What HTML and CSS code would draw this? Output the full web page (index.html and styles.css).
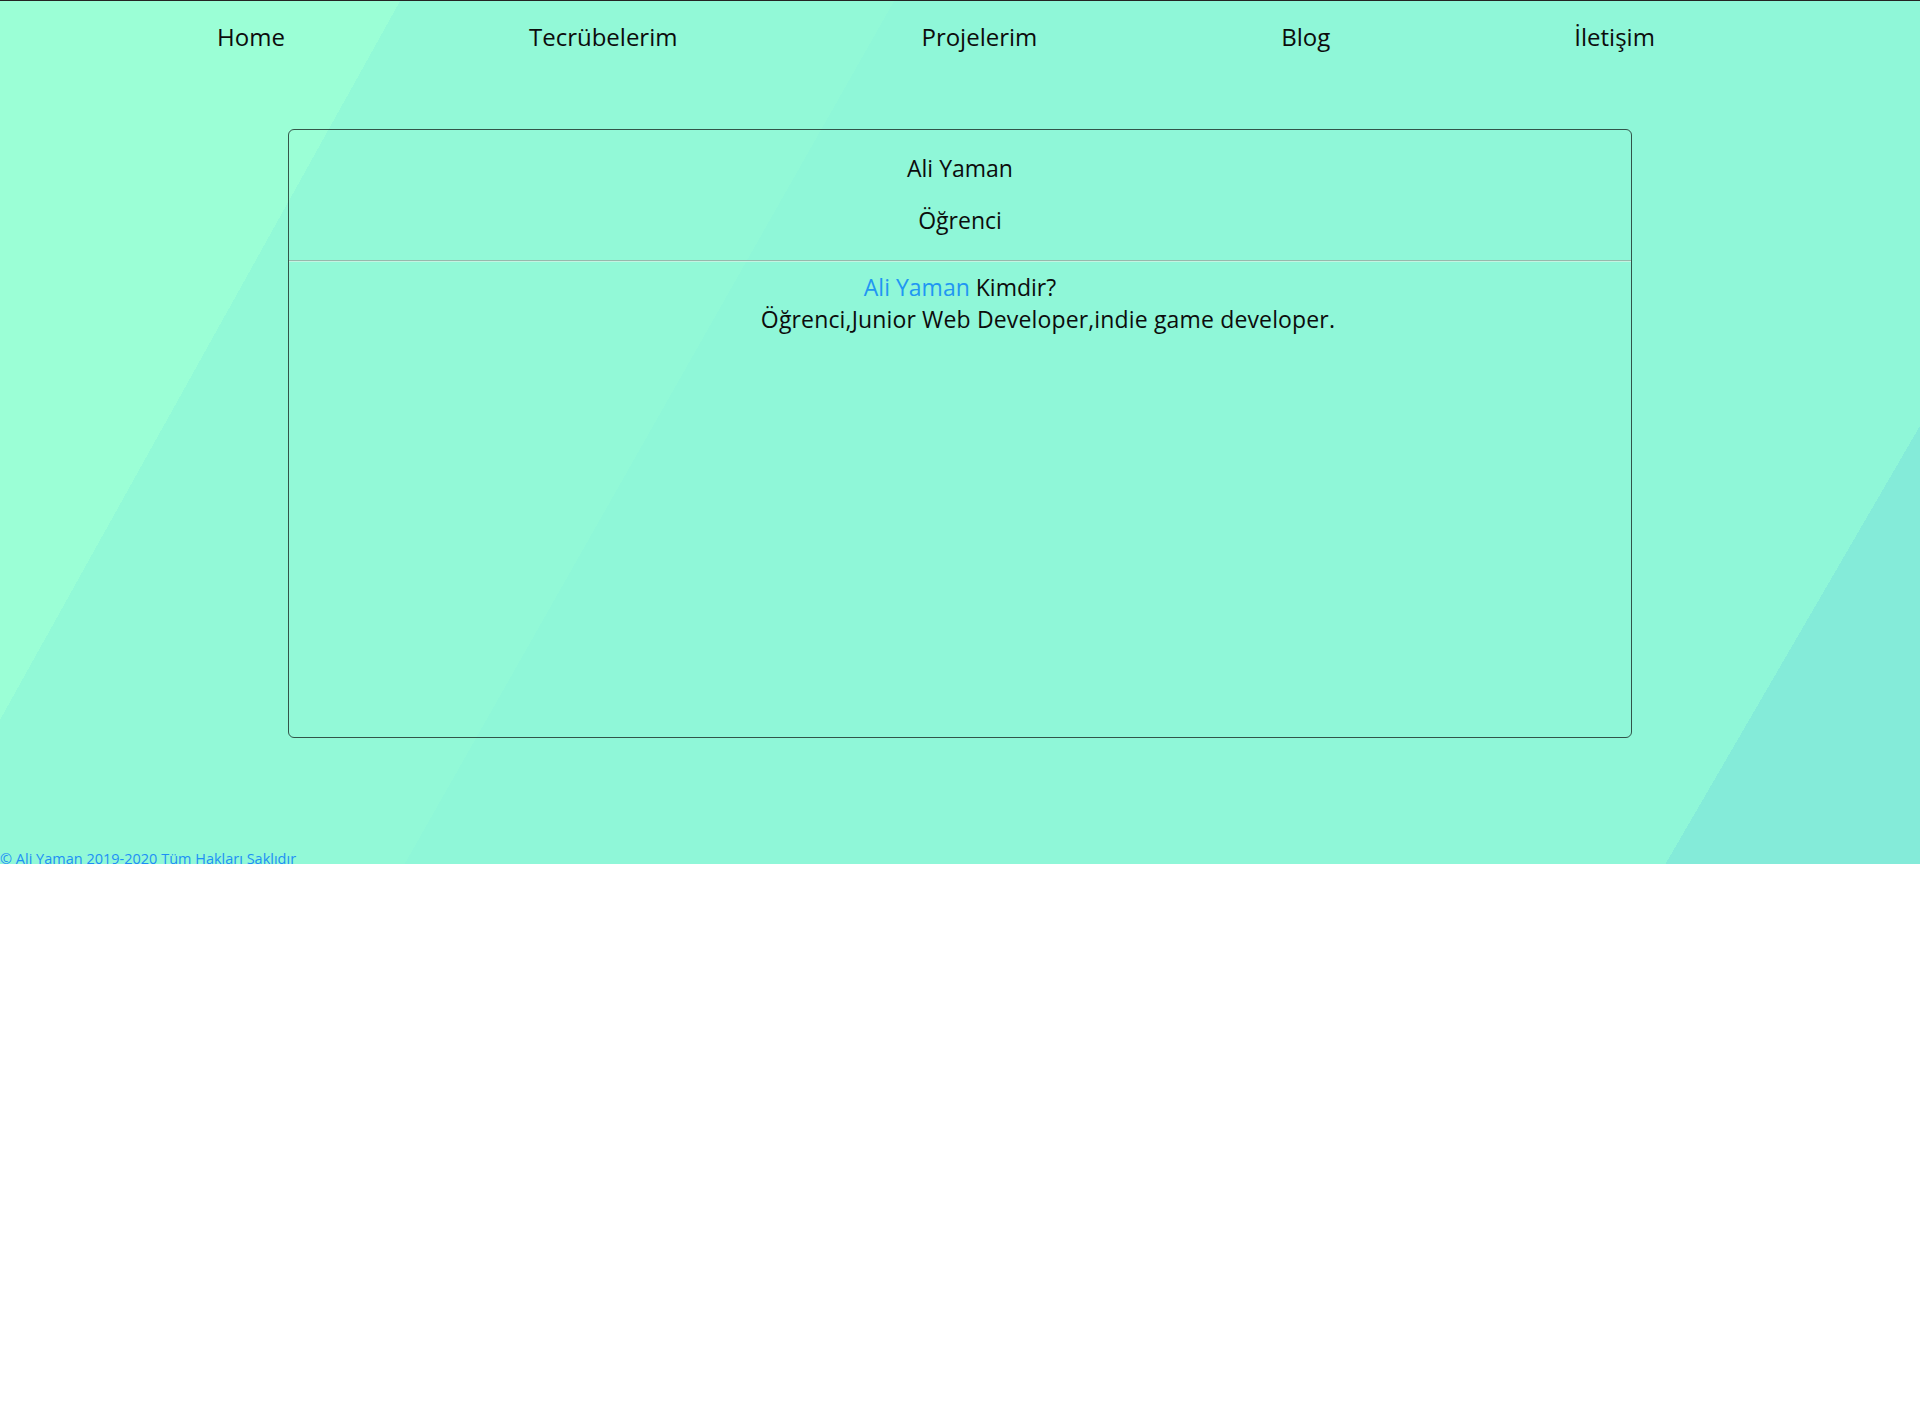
FILE: index.html
```html
<!DOCTYPE html>
<html lang="tr">
<head>
<meta charset="utf-8">
<title>Ali Yaman</title>
<link rel="stylesheet" href="styles.css">
</head>
<body>
<div class="page">
  <nav class="nav">
    <ul class="nav-list">
      <li class="nav-item"><a class="nav-link" href="#">Home</a></li>
      <li class="nav-item"><a class="nav-link" href="#">Tecrübelerim</a></li>
      <li class="nav-item"><a class="nav-link" href="#">Projelerim</a></li>
      <li class="nav-item"><a class="nav-link" href="#">Blog</a></li>
      <li class="nav-item"><a class="nav-link" href="#">İletişim</a></li>
    </ul>
  </nav>
  <main class="card">
    <header class="card-head">
      <p class="card-name">Ali Yaman</p>
      <p class="card-role">Öğrenci</p>
    </header>
    <hr class="card-rule">
    <section class="card-body">
      <p class="about-title"><span class="accent">Ali Yaman</span> Kimdir?</p>
      <p class="about-text">Öğrenci,Junior Web Developer,indie game developer.</p>
    </section>
  </main>
  <footer class="footer">© Ali Yaman 2019-2020 Tüm Hakları Saklıdır</footer>
</div>
</body>
</html>
```
FILE: styles.css
```css
html, body {
  margin: 0;
  padding: 0;
  background: #ffffff;
}

body {
  font-family: "Open Sans", "DejaVu Sans", sans-serif;
  color: #0c0c0c;
}

.page {
  height: 864px;
  box-sizing: border-box;
  overflow: hidden;
  border-top: 1px solid #242424;
  background-color: #8ff7d8;
  background-image:
    linear-gradient(119.1deg, #9bffd6 349.6px, transparent 349.6px),
    linear-gradient(119.56deg, #92f9d7 777.7px, transparent 777.7px),
    linear-gradient(120.15deg, transparent 1873.6px, #84ebd9 1873.6px);
}

.nav-list {
  list-style: none;
  margin: 0;
  padding: 20px 48px 0 0;
  display: flex;
  justify-content: center;
  gap: 244px;
}

.nav-link {
  display: block;
  font-size: 24px;
  line-height: 32px;
  color: #0c0c0c;
  text-decoration: none;
}

.card {
  display: block;
  width: 70%;
  height: 609px;
  box-sizing: border-box;
  margin: 76px auto 0;
  border: 1px solid rgba(0, 0, 0, 0.66);
  border-radius: 6px;
  text-align: center;
  font-size: 23px;
}

.card-head {
  padding-top: 23px;
}

.card-name,
.card-role {
  margin: 0;
  line-height: 30px;
}

.card-role {
  margin-top: 22px;
}

.card-rule {
  margin: 25px 0 0;
  height: 0;
  border: 0;
  border-top: 1px solid #97b9ac;
  border-bottom: 1px solid #c2f4e2;
}

.card-body {
  padding-top: 9px;
}

.about-title,
.about-text {
  margin: 0;
  line-height: 32px;
}

.about-text {
  padding-left: 176px;
  letter-spacing: 0.15px;
}

.accent {
  color: #2196f3;
}

.footer {
  margin-top: 111px;
  font-size: 14.5px;
  line-height: 20px;
  color: #1e8ff5;
}
```
